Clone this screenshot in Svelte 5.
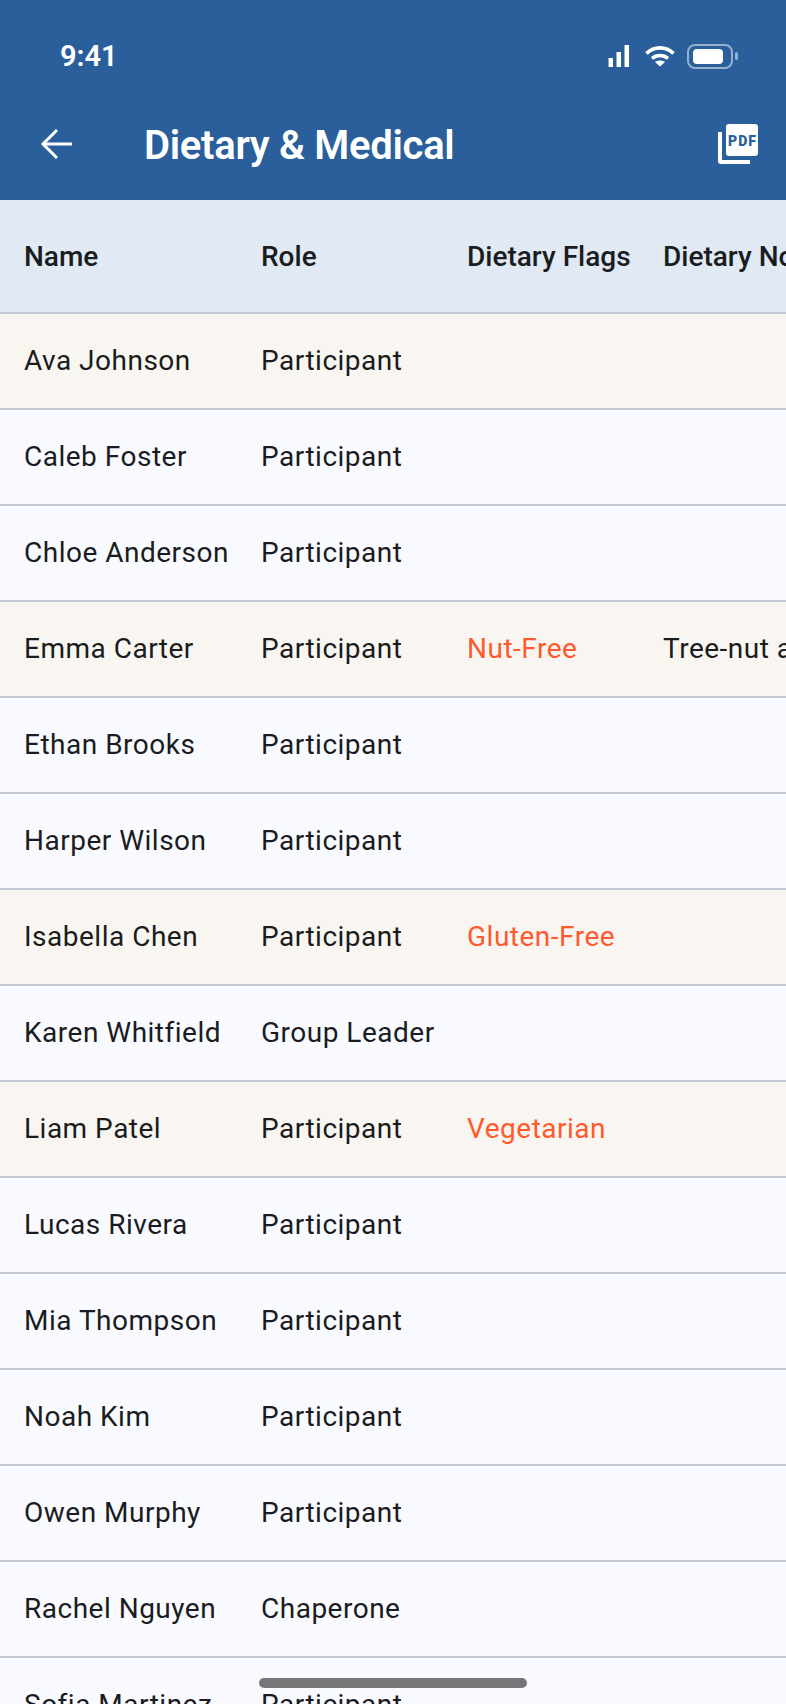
<script lang="ts">
  interface Row {
    name: string;
    role: string;
    flag?: string;
    notes?: string;
  }

  const rows: Row[] = [
    { name: 'Ava Johnson', role: 'Participant', notes: ' ' },
    { name: 'Caleb Foster', role: 'Participant' },
    { name: 'Chloe Anderson', role: 'Participant' },
    { name: 'Emma Carter', role: 'Participant', flag: 'Nut-Free', notes: 'Tree-nut allergy' },
    { name: 'Ethan Brooks', role: 'Participant' },
    { name: 'Harper Wilson', role: 'Participant' },
    { name: 'Isabella Chen', role: 'Participant', flag: 'Gluten-Free' },
    { name: 'Karen Whitfield', role: 'Group Leader' },
    { name: 'Liam Patel', role: 'Participant', flag: 'Vegetarian' },
    { name: 'Lucas Rivera', role: 'Participant' },
    { name: 'Mia Thompson', role: 'Participant' },
    { name: 'Noah Kim', role: 'Participant' },
    { name: 'Owen Murphy', role: 'Participant' },
    { name: 'Rachel Nguyen', role: 'Chaperone' },
    { name: 'Sofia Martinez', role: 'Participant' }
  ];
</script>

<div class="screen">
  <header class="top">
    <div class="status">
      <span class="time">9:41</span>
      <div class="status-icons">
        <svg width="22" height="22" viewBox="0 0 22 22" fill="#fff">
          <rect x="0.5" y="13" width="4.5" height="9" />
          <rect x="8.5" y="7" width="4.5" height="15" />
          <rect x="16.5" y="0" width="4.5" height="22" />
        </svg>
        <svg class="wifi" width="30" height="22" viewBox="0 0 30 22" fill="none" stroke="#fff" stroke-width="3.6">
          <path d="M1.5 8.5C9 1 21 1 28.5 8.5" />
          <path d="M7 13.5C11.5 9.5 18.5 9.5 23 13.5" />
          <path d="M15 21.5L10 17C13 15 17 15 20 17Z" fill="#fff" stroke="none" />
        </svg>
        <div class="battery">
          <div class="battery-body"><span class="battery-fill"></span></div>
          <span class="battery-cap"></span>
        </div>
      </div>
    </div>
    <div class="appbar">
      <button class="back" type="button" aria-label="Back">
        <svg width="32" height="32" viewBox="0 0 32 32" fill="none" stroke="#fff" stroke-width="3">
          <path d="M32 16H3" />
          <path d="M17 2L3 16L17 30" />
        </svg>
      </button>
      <h1>Dietary &amp; Medical</h1>
      <button class="pdf" type="button" aria-label="Export PDF">
        <svg width="48" height="48" viewBox="0 0 48 48">
          <rect x="12" y="4" width="32" height="32" rx="3" fill="#fff" />
          <path d="M4 12h4v28h28v4H7a3 3 0 0 1-3-3z" fill="#fff" />
          <text x="28.5" y="26" class="pdf-label">PDF</text>
        </svg>
      </button>
    </div>
  </header>

  <div class="table">
    <div class="row head">
      <span>Name</span>
      <span>Role</span>
      <span>Dietary Flags</span>
      <span>Dietary Notes</span>
    </div>
    {#each rows as row}
      <div class="row" class:flagged={row.flag || row.notes}>
        <span>{row.name}</span>
        <span>{row.role}</span>
        <span class="flag">{row.flag ?? ''}</span>
        <span>{row.notes ?? ''}</span>
      </div>
    {/each}
  </div>

  <div class="home-bar"></div>
</div>

<style>
  :global(body) {
    margin: 0;
  }

  .screen {
    position: relative;
    width: 786px;
    height: 1704px;
    overflow: hidden;
    background: #f9faff;
    font-family: Roboto, sans-serif;
    color: #191c20;
  }

  .top {
    height: 200px;
    background: #2a5f9c;
    color: #fff;
  }

  .status {
    display: flex;
    align-items: center;
    justify-content: space-between;
    height: 96px;
    padding: 16px 48px 0 60px;
    box-sizing: border-box;
  }

  .time {
    font-size: 29px;
    font-weight: 600;
  }

  .status-icons {
    display: flex;
    align-items: center;
    gap: 15px;
  }

  .wifi {
    margin-right: -3px;
  }

  .battery {
    display: flex;
    align-items: center;
    gap: 2px;
  }

  .battery-body {
    display: flex;
    align-items: center;
    width: 46px;
    height: 25px;
    padding: 4px;
    box-sizing: border-box;
    border: 2px solid rgba(255, 255, 255, 0.5);
    border-radius: 8px;
  }

  .battery-fill {
    display: block;
    width: 30px;
    height: 15px;
    background: #fff;
    border-radius: 4px;
  }

  .battery-cap {
    width: 3px;
    height: 8px;
    background: rgba(255, 255, 255, 0.5);
    border-radius: 2px;
  }

  .appbar {
    display: flex;
    align-items: center;
    height: 96px;
    padding: 0 24px 0 40px;
  }

  .appbar button {
    display: flex;
    padding: 0;
    background: none;
    border: none;
  }

  h1 {
    flex: 1;
    margin: 2px 0 0 72px;
    font-size: 40px;
    font-weight: 600;
    letter-spacing: -0.3px;
  }

  .pdf-label {
    fill: #2a5f9c;
    font-family: Roboto, sans-serif;
    font-size: 14px;
    font-weight: 900;
    letter-spacing: 1px;
    text-anchor: middle;
  }

  .row {
    display: grid;
    grid-template-columns: 237px 206px 196px 400px;
    align-items: center;
    width: max-content;
    min-width: 100%;
    height: 96px;
    padding: 0 0 2px 24px;
    box-sizing: border-box;
    border-bottom: 2px solid #c5c7d2;
    font-size: 28px;
    letter-spacing: 0.5px;
    white-space: nowrap;
  }

  .row.head {
    height: 114px;
    padding-bottom: 0;
    background: #e1e9f4;
    font-weight: 500;
    letter-spacing: 0;
  }

  .row.flagged {
    background: #f9f6f2;
  }

  .flag {
    color: #ff5a2e;
  }

  .home-bar {
    position: absolute;
    left: 259px;
    top: 1678px;
    width: 268px;
    height: 10px;
    background: #767679;
    border-radius: 5px;
  }
</style>
